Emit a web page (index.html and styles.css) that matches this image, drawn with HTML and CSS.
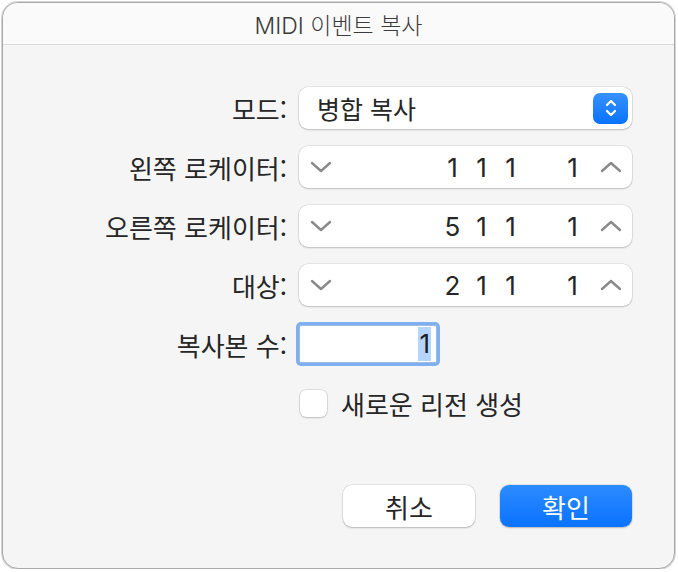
FILE: index.html
```html
<!DOCTYPE html>
<html lang="ko">
<head>
    <meta charset="UTF-8">
    <meta name="viewport" content="width=device-width, initial-scale=1.0">
    <title>MIDI 이벤트 복사</title>
    <link rel="stylesheet" href="styles.css">
</head>
<body>
    <div class="window">
        <div class="titlebar">MIDI 이벤트 복사</div>

        <div class="content">
            <div class="form">
                <label class="label">모드:</label>
                <div class="popup">
                    <span class="popup-text">병합 복사</span>
                    <span class="popup-arrows">
                        <svg width="14" height="22" viewBox="0 0 14 22">
                            <path d="M3 8 L7 4 L11 8" fill="none" stroke="#fff" stroke-width="2.2" stroke-linecap="round" stroke-linejoin="round"/>
                            <path d="M3 14 L7 18 L11 14" fill="none" stroke="#fff" stroke-width="2.2" stroke-linecap="round" stroke-linejoin="round"/>
                        </svg>
                    </span>
                </div>

                <label class="label">왼쪽 로케이터:</label>
                <div class="stepper">
                    <span class="chev chev-down">
                        <svg width="22" height="12" viewBox="0 0 22 12"><path d="M2 2 L11 10 L20 2" fill="none" stroke="#8a8a8a" stroke-width="2.4" stroke-linecap="round" stroke-linejoin="round"/></svg>
                    </span>
                    <span class="digits">
                        <span class="digit">1</span><span class="digit">1</span><span class="digit">1</span><span class="digit last">1</span>
                    </span>
                    <span class="chev chev-up">
                        <svg width="22" height="12" viewBox="0 0 22 12"><path d="M2 10 L11 2 L20 10" fill="none" stroke="#8a8a8a" stroke-width="2.4" stroke-linecap="round" stroke-linejoin="round"/></svg>
                    </span>
                </div>

                <label class="label">오른쪽 로케이터:</label>
                <div class="stepper">
                    <span class="chev chev-down">
                        <svg width="22" height="12" viewBox="0 0 22 12"><path d="M2 2 L11 10 L20 2" fill="none" stroke="#8a8a8a" stroke-width="2.4" stroke-linecap="round" stroke-linejoin="round"/></svg>
                    </span>
                    <span class="digits">
                        <span class="digit">5</span><span class="digit">1</span><span class="digit">1</span><span class="digit last">1</span>
                    </span>
                    <span class="chev chev-up">
                        <svg width="22" height="12" viewBox="0 0 22 12"><path d="M2 10 L11 2 L20 10" fill="none" stroke="#8a8a8a" stroke-width="2.4" stroke-linecap="round" stroke-linejoin="round"/></svg>
                    </span>
                </div>

                <label class="label">대상:</label>
                <div class="stepper">
                    <span class="chev chev-down">
                        <svg width="22" height="12" viewBox="0 0 22 12"><path d="M2 2 L11 10 L20 2" fill="none" stroke="#8a8a8a" stroke-width="2.4" stroke-linecap="round" stroke-linejoin="round"/></svg>
                    </span>
                    <span class="digits">
                        <span class="digit">2</span><span class="digit">1</span><span class="digit">1</span><span class="digit last">1</span>
                    </span>
                    <span class="chev chev-up">
                        <svg width="22" height="12" viewBox="0 0 22 12"><path d="M2 10 L11 2 L20 10" fill="none" stroke="#8a8a8a" stroke-width="2.4" stroke-linecap="round" stroke-linejoin="round"/></svg>
                    </span>
                </div>

                <label class="label">복사본 수:</label>
                <div class="copies">
                    <span class="copies-value">1</span>
                </div>

                <span></span>
                <div class="check-row">
                    <span class="checkbox"></span>
                    <span class="check-label">새로운 리전 생성</span>
                </div>
            </div>

            <div class="buttons">
                <button class="btn">취소</button>
                <button class="btn btn-primary">확인</button>
            </div>
        </div>
    </div>
</body>
</html>
```

FILE: styles.css
```css
body {
    margin: 0;
    background: #ffffff;
    font-family: Inter, "Noto Sans CJK KR", sans-serif;
    color: #262626;
}
.window {
    margin: 2px 0 0 2px;
    width: 671px;
    height: 565px;
    border: 1px solid #a9a9a9;
    box-shadow: 0 0 0 1px #d6d6d6;
    border-radius: 16px;
    background: #f5f5f5;
    overflow: hidden;
    display: flex;
    flex-direction: column;
}
.titlebar {
    height: 41px;
    background: #fafafa;
    border-bottom: 1px solid #dadada;
    display: flex;
    align-items: center;
    justify-content: center;
    font-family: Inter, "Noto Sans CJK KR", sans-serif;
    font-size: 23px;
    font-weight: 300;
    color: #3c3c3c;
}
.content {
    padding-top: 42px;
    display: flex;
    flex-direction: column;
}
.form {
    display: grid;
    grid-template-columns: 284px 333px;
    grid-auto-rows: 42px;
    column-gap: 12px;
    row-gap: 17px;
    align-items: center;
}
.label {
    text-align: right;
    font-family: "Noto Sans CJK KR", sans-serif;
    font-size: 26px;
    color: #262626;
}
.popup,
.stepper {
    height: 42px;
    background: #fff;
    border-radius: 9px;
    box-shadow: 0 0 0 0.5px rgba(0,0,0,0.12), 0 1px 2px rgba(0,0,0,0.18);
    display: flex;
    align-items: center;
    box-sizing: border-box;
}
.popup {
    padding: 0 4px 0 18px;
    justify-content: space-between;
}
.popup-text {
    font-family: "Noto Sans CJK KR", sans-serif;
    font-size: 25px;
    color: #262626;
}
.popup-arrows {
    width: 35px;
    height: 31px;
    border-radius: 7px;
    background: linear-gradient(#3792ff, #0a72ff);
    display: flex;
    align-items: center;
    justify-content: center;
}
.chev {
    display: flex;
    align-items: center;
    justify-content: center;
}
.chev-down {
    width: 44px;
}
.chev-up {
    width: 45px;
    padding-left: 3px;
    box-sizing: border-box;
}
.digits {
    margin-left: auto;
    display: flex;
}
.digit {
    width: 29px;
    text-align: center;
    font-family: Inter, sans-serif;
    font-size: 26px;
    color: #262626;
}
.digit.last {
    margin-left: 33px;
}
.copies {
    width: 138px;
    height: 38px;
    box-sizing: border-box;
    background: #fff;
    border: 1px solid #9fb8dc;
    box-shadow: 0 0 0 3px #7fb0f3;
    border-radius: 2px;
    display: flex;
    justify-content: flex-end;
    align-items: center;
    padding-right: 5px;
}
.copies-value {
    font-family: Inter, sans-serif;
    font-size: 26px;
    line-height: 34px;
    padding: 0 1px;
    background: #b3d5ff;
    color: #1e1e1e;
}
.check-row {
    display: flex;
    align-items: center;
    gap: 14px;
    padding-left: 1px;
}
.checkbox {
    width: 27px;
    height: 27px;
    box-sizing: border-box;
    background: #fff;
    border-radius: 6px;
    box-shadow: 0 0 0 0.5px rgba(0,0,0,0.18), 0 1px 2px rgba(0,0,0,0.15);
}
.check-label {
    font-family: "Noto Sans CJK KR", sans-serif;
    font-size: 26px;
    color: #262626;
}
.buttons {
    margin-top: 61px;
    display: flex;
    justify-content: flex-end;
    gap: 25px;
    padding-right: 42px;
}
.btn {
    width: 132px;
    height: 42px;
    border: none;
    border-radius: 9px;
    background: #fff;
    box-shadow: 0 0 0 0.5px rgba(0,0,0,0.12), 0 1px 2px rgba(0,0,0,0.2);
    font-family: "Noto Sans CJK KR", sans-serif;
    font-size: 26px;
    color: #262626;
}
.btn-primary {
    background: linear-gradient(#2c8bff, #0a72ff);
    color: #fff;
}
```
